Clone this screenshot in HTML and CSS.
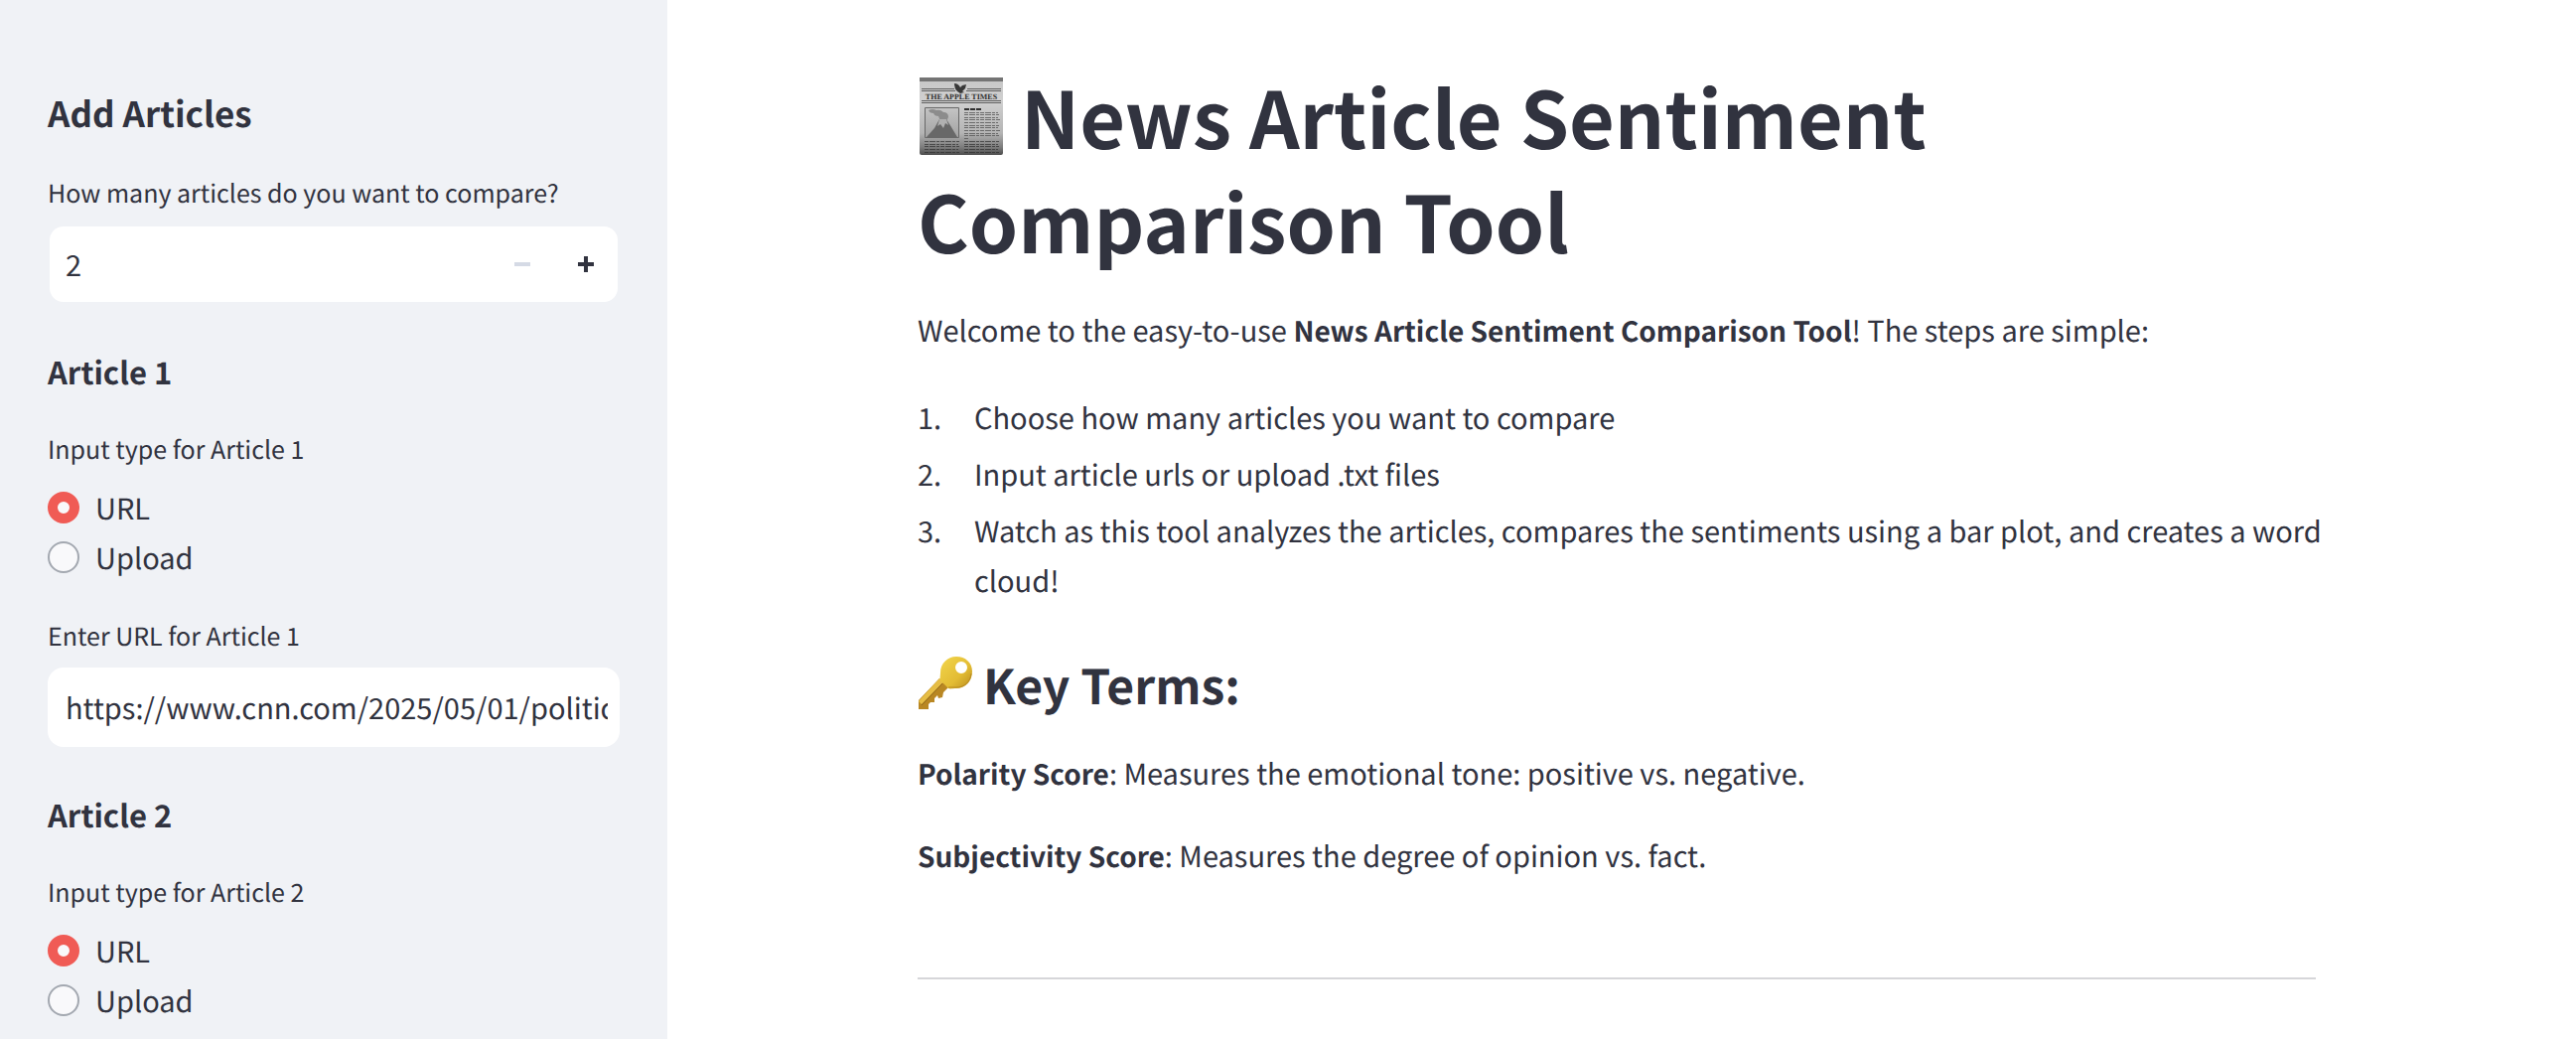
FILE: index.html
```html
<!DOCTYPE html>
<html lang="en">
<head>
<meta charset="utf-8">
<meta name="viewport" content="width=device-width, initial-scale=1">
<title>News Article Sentiment Comparison Tool</title>
<link rel="stylesheet" href="styles.css">
</head>
<body>
<aside class="sidebar">
  <h2>Add Articles</h2>
  <div class="field">
    <label for="count">How many articles do you want to compare?</label>
    <div class="number">
      <input id="count" type="text" inputmode="numeric" value="2">
      <button type="button" aria-label="Decrease" disabled><svg viewBox="0 0 16 16"><path d="M0 6h16v4H0z"/></svg></button>
      <button type="button" aria-label="Increase"><svg viewBox="0 0 16 16"><path d="M6 0h4v6h6v4h-6v6H6v-6H0V6h6z"/></svg></button>
    </div>
  </div>
  <section class="article">
    <h3>Article 1</h3>
    <fieldset>
      <legend>Input type for Article 1</legend>
      <label class="choice"><input type="radio" name="type1" checked>URL</label>
      <label class="choice"><input type="radio" name="type1">Upload</label>
    </fieldset>
    <div class="field">
      <label for="url1">Enter URL for Article 1</label>
      <div class="text"><input id="url1" type="text" value="https://www.cnn.com/2025/05/01/politics"></div>
    </div>
  </section>
  <section class="article">
    <h3>Article 2</h3>
    <fieldset>
      <legend>Input type for Article 2</legend>
      <label class="choice"><input type="radio" name="type2" checked>URL</label>
      <label class="choice"><input type="radio" name="type2">Upload</label>
    </fieldset>
  </section>
</aside>
<main class="main">
  <div class="content">
    <h1><svg class="newspaper" viewBox="0 0 88 84" aria-hidden="true">
      <defs>
        <linearGradient id="paper" x1="0" y1="0" x2="0" y2="1">
          <stop offset="0" stop-color="#c6c6c6"/><stop offset=".3" stop-color="#d0d0d0"/><stop offset=".72" stop-color="#b4b4b4"/><stop offset=".9" stop-color="#7c7c7c"/><stop offset="1" stop-color="#4c4c4c"/>
        </linearGradient>
        <linearGradient id="photo" x1="0" y1="0" x2="0" y2="1"><stop offset="0" stop-color="#c4c4c4"/><stop offset="1" stop-color="#a2a2a2"/></linearGradient>
      </defs>
      <path fill="url(#paper)" d="M2 2h84v76q0 2-2 2H4q-2 0-2-2z"/>
      <path fill="#747474" d="M2 2h84v4H2z"/>
      <path stroke="#606060" stroke-width="1" d="M4 13.500h33M50 13.500h34M4 15.500h34M49 15.500h35M4 25.500h80M4 27.500h80"/>
      <path fill="#383838" d="M37 8q4 0 6 4l2-2 4-1-1 4-3 3 2 1-4 1-3-2q-3-3-3-8z"/>
      <text x="44" y="24" text-anchor="middle" class="masthead">THE APPLE TIMES</text>
      <path fill="url(#photo)" stroke="#686868" d="M7.500 32.500h34v30h-34z"/>
      <path fill="#8c8c8c" d="M11 35q4-2 8 0 4-1 7 2 5 0 5 5l-2 4h-6l-2-5q-4 0-5-3-4 0-5-3z"/>
      <path fill="#686868" d="M9 62l8-9 5-9 7 0 5 8 6 10z"/>
      <path fill="#b0b0b0" d="M22 44h7l2 6-3-2-2 5-3-4-3 2z"/>
      <path stroke="#303030" stroke-width="2" stroke-dasharray="5 1" d="M47 34h18"/>
      <path stroke="#505050" stroke-width="1" stroke-dasharray="4 1 6 1 3 1" opacity=".75" d="M47 37.500h34M47 39.500h35M47 42.500h34M47 44.500h36M47 47.500h34M47 50.500h35M47 52.500h34M47 55.500h36M47 58.500h34M47 60.500h35M47 63.500h4"/>
      <path stroke="#303030" stroke-width="1" stroke-dasharray="4 1 6 1 3 1" opacity=".7" d="M7 66.500h35M7 69.500h34M7 71.500h35M7 74.500h34M7 77.500h35M47 66.500h35M47 69.500h34M47 71.500h35M47 74.500h34M47 77.500h35"/>
    </svg>News Article Sentiment Comparison Tool</h1>
    <p>Welcome to the easy-to-use <strong>News Article Sentiment Comparison Tool</strong>! The steps are simple:</p>
    <ol>
      <li>Choose how many articles you want to compare</li>
      <li>Input article urls or upload .txt files</li>
      <li>Watch as this tool analyzes the articles, compares the sentiments using a bar plot, and creates a word cloud!</li>
    </ol>
    <h2><svg class="key" viewBox="0 0 56 56" aria-hidden="true">
      <defs>
        <linearGradient id="gold" x1="0" y1="0" x2="1" y2="1"><stop offset="0" stop-color="#f2d64c"/><stop offset=".6" stop-color="#e3bc34"/><stop offset="1" stop-color="#b98c1f"/></linearGradient>
      </defs>
      <path fill="#b98723" d="M22 23l9 9-5 5-1 5-4 1-1-3-3 3 0 4-4 0-2 2 0 5H1V45z"/>
      <path fill="#e6bd45" d="M22 23l4 4L4 49l-3-3z"/>
      <path stroke="#8f671a" stroke-width="1" fill="none" d="M25 28L4 50"/>
      <path fill="url(#gold)" fill-rule="evenodd" d="M39 1c9 0 16 6 16 15 0 10-7 17-16 17-4 0-6 1-8 0l-8-8c-1-2 0-5 0-8C23 8 30 1 39 1zM44 6a6 6 0 1 0 0 12 6 6 0 0 0 0-12z"/>
      <path stroke="#b98c1f" stroke-width="1" fill="none" d="M54 18c-1 9-7 14-15 14l-8 0"/>
    </svg>Key Terms:</h2>
    <p><strong>Polarity Score</strong>: Measures the emotional tone: positive vs. negative.</p>
    <p><strong>Subjectivity Score</strong>: Measures the degree of opinion vs. fact.</p>
    <hr>
  </div>
</main>
</body>
</html>
```
FILE: styles.css
```css
* {
  box-sizing: border-box;
}

body {
  margin: 0;
  min-height: 100vh;
  display: flex;
  color: #31333f;
  background: #fff;
  font: 29px/50px "Noto Sans CJK SC", "Noto Sans", sans-serif;
  text-rendering: geometricPrecision;
}

h1, h2, h3, p, ol, fieldset, legend {
  margin: 0;
  padding: 0;
  border: 0;
}

input, button {
  margin: 0;
  padding: 0;
  border: 0;
  background: none;
  color: inherit;
  font: inherit;
  text-rendering: inherit;
}

strong {
  font-size: 28px;
}

/* Sidebar */
.sidebar {
  flex: 0 0 672px;
  padding: 90px 48px 12px;
  background: #f0f2f6;
}

.sidebar h2 {
  margin-bottom: 36px;
  font-size: 35px;
  line-height: 48px;
}

.sidebar h3 {
  margin-bottom: 36px;
  font-size: 31px;
  line-height: 44px;
}

.article {
  margin-top: 46px;
}

.field > label,
legend {
  display: block;
  font-size: 25px;
  line-height: 40px;
}

.field > label {
  margin-bottom: 12px;
}

legend {
  margin-bottom: 14px;
}

fieldset + .field {
  margin-top: 34px;
}

.number,
.text {
  display: flex;
  height: 80px;
  border-radius: 16px;
  background: #fff;
}

.number {
  border: 2px solid transparent;
  background-clip: padding-box;
}

.number input,
.text input {
  flex: 1;
  min-width: 0;
}

.number input {
  padding-left: 16px;
}

.text {
  padding: 0 12px 0 18px;
}

.number button {
  width: 64px;
  display: grid;
  place-items: center;
}

.number button:disabled {
  color: #d5dae5;
}

.number svg {
  width: 16px;
  height: 16px;
  fill: currentColor;
}

.choice {
  display: flex;
  align-items: center;
  gap: 16px;
}

.choice input {
  appearance: none;
  width: 32px;
  height: 32px;
  border: 2px solid #a3a8b0;
  border-radius: 50%;
  background: #f9f9fb;
}

.choice input:checked {
  border: 10px solid #f05b55;
}

/* Main column */
.main {
  flex: 1;
  min-width: 0;
  padding: 63px 42px 0 32px;
}

.content {
  max-width: 1408px;
  margin: 0 auto;
}

.content h1 {
  margin-bottom: 34px;
  font-size: 79px;
  line-height: 105px;
}

.content h2 {
  margin: 49px 0 35px;
  font-size: 48px;
  line-height: 60px;
}

.content p + p {
  margin-top: 32px;
}

.newspaper {
  width: 88px;
  height: 84px;
  margin-right: 16px;
  vertical-align: -10px;
}

.masthead {
  font: bold 8px "Liberation Serif", serif;
  fill: #303030;
}

.key {
  width: 56px;
  height: 56px;
  margin-right: 10px;
  vertical-align: -7px;
}

ol {
  margin: 37px -16px 0 0;
  list-style: none;
  counter-reset: step;
  display: grid;
  gap: 7px;
}

li {
  display: flex;
  counter-increment: step;
}

li::before {
  content: counter(step) ".";
  flex: 0 0 57px;
}

hr {
  height: 2px;
  margin: 97px 0 0;
  border: 0;
  background: #d6d6d9;
}
```
